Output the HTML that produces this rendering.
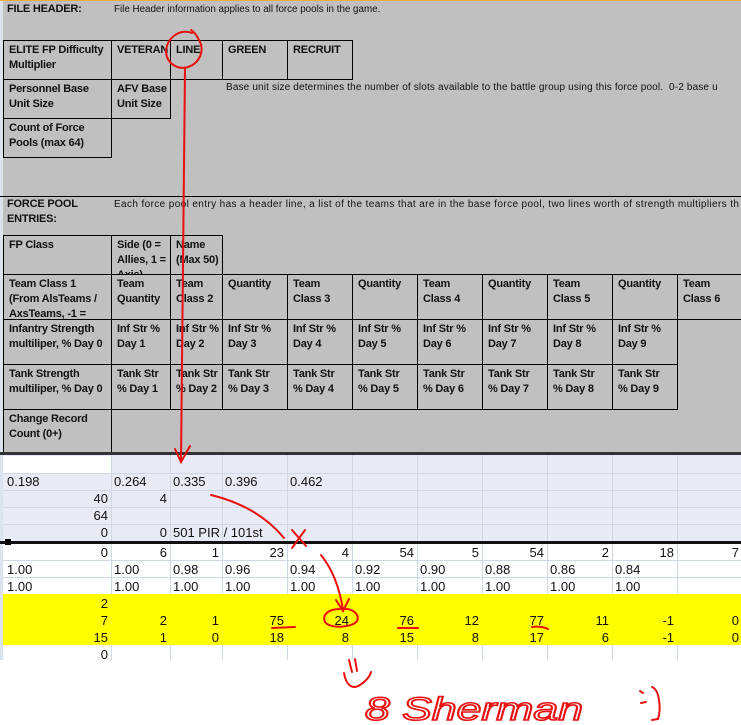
<!DOCTYPE html>
<html><head><meta charset="utf-8"><style>
*{margin:0;padding:0}
body{width:741px;height:725px;position:relative;background:#fff;overflow:hidden;font-family:"Liberation Sans",Arial,sans-serif}
.gray{position:absolute;left:3px;top:0;width:738px;height:453px;background:#c0c0c0}
.strip{position:absolute;left:0;top:0;width:3px;height:660px;background:#dbe3ef}
.c{position:absolute;border:1px solid #000;box-sizing:border-box;font:bold 11px/15px "Liberation Sans",Arial,sans-serif;letter-spacing:-0.2px;padding:2px 0 0 5px;overflow:hidden;white-space:nowrap;color:#111}
.t{position:absolute;font:bold 11px/15px "Liberation Sans",Arial,sans-serif;letter-spacing:-0.2px;color:#111;white-space:nowrap}
.d{position:absolute;font:10px/15px "Liberation Sans",Arial,sans-serif;color:#111;white-space:nowrap}
.n{position:absolute;font:13px/17px "Liberation Sans Narrow","Liberation Sans",Arial,sans-serif;color:#111;white-space:nowrap}
.vl{position:absolute;width:1px;background:#d0d7e5}
.hl{position:absolute;height:1px;background:#d0d7e5;left:3px;width:738px}
</style></head><body>
<div class="gray"></div>
<div class="strip"></div>
<div style="position:absolute;left:0;top:0;width:741px;height:1px;background:#f3a64a"></div>
<div style="position:absolute;left:0;top:196px;width:741px;height:1px;background:#000"></div>

<div class="t" style="left:7px;top:2px">FILE HEADER:</div>
<div class="d" style="left:114px;top:2px;font-size:9.8px">File Header information applies to all force pools in the game.</div>
<div class="d" style="left:226px;top:80px;letter-spacing:0.15px">Base unit size determines the number of slots available to the battle group using this force pool.&nbsp; 0-2 base u</div>
<div class="t" style="left:7px;top:197px">FORCE POOL<br>ENTRIES:</div>
<div class="d" style="left:114px;top:197px;letter-spacing:0.38px">Each force pool entry has a header line, a list of the teams that are in the base force pool, two lines worth of strength multipliers th</div>

<div class="c" style="left:3px;top:40px;width:109px;height:40px">ELITE FP Difficulty<br>Multiplier</div>
<div class="c" style="left:111px;top:40px;width:60px;height:40px">VETERAN</div>
<div class="c" style="left:170px;top:40px;width:53px;height:40px">LINE</div>
<div class="c" style="left:222px;top:40px;width:66px;height:40px">GREEN</div>
<div class="c" style="left:287px;top:40px;width:66px;height:40px">RECRUIT</div>
<div class="c" style="left:3px;top:79px;width:109px;height:40px">Personnel Base<br>Unit Size</div>
<div class="c" style="left:111px;top:79px;width:60px;height:40px">AFV Base<br>Unit Size</div>
<div class="c" style="left:3px;top:118px;width:109px;height:40px">Count of Force<br>Pools (max 64)</div>

<div class="c" style="left:3px;top:235px;width:109px;height:40px">FP Class</div>
<div class="c" style="left:111px;top:235px;width:60px;height:40px">Side (0 =<br>Allies, 1 =<br>Axis)</div>
<div class="c" style="left:170px;top:235px;width:53px;height:40px">Name<br>(Max 50)</div>

<div class="c" style="left:3px;top:274px;width:109px;height:46px">Team Class 1<br>(From AlsTeams /<br>AxsTeams, -1 =</div>
<div class="c" style="left:111px;top:274px;width:60px;height:46px">Team<br>Quantity</div>
<div class="c" style="left:170px;top:274px;width:53px;height:46px">Team<br>Class 2</div>
<div class="c" style="left:222px;top:274px;width:66px;height:46px">Quantity</div>
<div class="c" style="left:287px;top:274px;width:66px;height:46px">Team<br>Class 3</div>
<div class="c" style="left:352px;top:274px;width:66px;height:46px">Quantity</div>
<div class="c" style="left:417px;top:274px;width:66px;height:46px">Team<br>Class 4</div>
<div class="c" style="left:482px;top:274px;width:66px;height:46px">Quantity</div>
<div class="c" style="left:547px;top:274px;width:66px;height:46px">Team<br>Class 5</div>
<div class="c" style="left:612px;top:274px;width:66px;height:46px">Quantity</div>
<div class="c" style="left:677px;top:274px;width:66px;height:46px">Team<br>Class 6</div>

<div class="c" style="left:3px;top:319px;width:109px;height:46px">Infantry Strength<br>multiliper, % Day 0</div>
<div class="c" style="left:111px;top:319px;width:60px;height:46px">Inf Str %<br>Day 1</div>
<div class="c" style="left:170px;top:319px;width:53px;height:46px">Inf Str %<br>Day 2</div>
<div class="c" style="left:222px;top:319px;width:66px;height:46px">Inf Str %<br>Day 3</div>
<div class="c" style="left:287px;top:319px;width:66px;height:46px">Inf Str %<br>Day 4</div>
<div class="c" style="left:352px;top:319px;width:66px;height:46px">Inf Str %<br>Day 5</div>
<div class="c" style="left:417px;top:319px;width:66px;height:46px">Inf Str %<br>Day 6</div>
<div class="c" style="left:482px;top:319px;width:66px;height:46px">Inf Str %<br>Day 7</div>
<div class="c" style="left:547px;top:319px;width:66px;height:46px">Inf Str %<br>Day 8</div>
<div class="c" style="left:612px;top:319px;width:66px;height:46px">Inf Str %<br>Day 9</div>

<div class="c" style="left:3px;top:364px;width:109px;height:46px">Tank Strength<br>multiliper, % Day 0</div>
<div class="c" style="left:111px;top:364px;width:60px;height:46px">Tank Str<br>% Day 1</div>
<div class="c" style="left:170px;top:364px;width:53px;height:46px">Tank Str<br>% Day 2</div>
<div class="c" style="left:222px;top:364px;width:66px;height:46px">Tank Str<br>% Day 3</div>
<div class="c" style="left:287px;top:364px;width:66px;height:46px">Tank Str<br>% Day 4</div>
<div class="c" style="left:352px;top:364px;width:66px;height:46px">Tank Str<br>% Day 5</div>
<div class="c" style="left:417px;top:364px;width:66px;height:46px">Tank Str<br>% Day 6</div>
<div class="c" style="left:482px;top:364px;width:66px;height:46px">Tank Str<br>% Day 7</div>
<div class="c" style="left:547px;top:364px;width:66px;height:46px">Tank Str<br>% Day 8</div>
<div class="c" style="left:612px;top:364px;width:66px;height:46px">Tank Str<br>% Day 9</div>

<div class="c" style="left:3px;top:409px;width:109px;height:45px">Change Record<br>Count (0+)</div>

<div style="position:absolute;left:3px;top:455px;width:738px;height:86px;background:#e8ebf5"></div>
<div style="position:absolute;left:3px;top:456px;width:108px;height:17px;background:#fff"></div>

<div class="vl" style="left:111px;top:455px;height:205px"></div>
<div class="vl" style="left:170px;top:455px;height:205px"></div>
<div class="vl" style="left:222px;top:455px;height:205px"></div>
<div class="vl" style="left:287px;top:455px;height:205px"></div>
<div class="vl" style="left:352px;top:455px;height:205px"></div>
<div class="vl" style="left:417px;top:455px;height:205px"></div>
<div class="vl" style="left:482px;top:455px;height:205px"></div>
<div class="vl" style="left:547px;top:455px;height:205px"></div>
<div class="vl" style="left:612px;top:455px;height:205px"></div>
<div class="vl" style="left:677px;top:455px;height:205px"></div>
<div class="hl" style="top:473px"></div>
<div class="hl" style="top:490px"></div>
<div class="hl" style="top:507px"></div>
<div class="hl" style="top:524px"></div>
<div class="hl" style="top:560px"></div>
<div class="hl" style="top:577px"></div>
<div style="position:absolute;left:3px;top:594px;width:738px;height:51px;background:#ffff00"></div>

<div style="position:absolute;left:0;top:452px;width:741px;height:3px;background:#333"></div>
<div style="position:absolute;left:0;top:541px;width:741px;height:3px;background:#111"></div>
<div style="position:absolute;left:5px;top:539px;width:6px;height:6px;background:#000"></div>

<div class="n" style="left:7px;top:473px">0.198</div>
<div class="n" style="left:114px;top:473px">0.264</div>
<div class="n" style="left:173px;top:473px">0.335</div>
<div class="n" style="left:225px;top:473px">0.396</div>
<div class="n" style="left:290px;top:473px">0.462</div>
<div class="n" style="right:633px;top:490px">40</div>
<div class="n" style="right:574px;top:490px">4</div>
<div class="n" style="right:633px;top:507px">64</div>
<div class="n" style="right:633px;top:524px">0</div>
<div class="n" style="right:574px;top:524px">0</div>
<div class="n" style="left:173px;top:524px">501 PIR / 101st</div>

<div class="n" style="right:633px;top:544px">0</div>
<div class="n" style="right:574px;top:544px">6</div>
<div class="n" style="right:522px;top:544px">1</div>
<div class="n" style="right:457px;top:544px">23</div>
<div class="n" style="right:392px;top:544px">4</div>
<div class="n" style="right:327px;top:544px">54</div>
<div class="n" style="right:262px;top:544px">5</div>
<div class="n" style="right:197px;top:544px">54</div>
<div class="n" style="right:132px;top:544px">2</div>
<div class="n" style="right:67px;top:544px">18</div>
<div class="n" style="right:2px;top:544px">7</div>

<div class="n" style="left:7px;top:561px">1.00</div>
<div class="n" style="left:114px;top:561px">1.00</div>
<div class="n" style="left:173px;top:561px">0.98</div>
<div class="n" style="left:225px;top:561px">0.96</div>
<div class="n" style="left:290px;top:561px">0.94</div>
<div class="n" style="left:355px;top:561px">0.92</div>
<div class="n" style="left:420px;top:561px">0.90</div>
<div class="n" style="left:485px;top:561px">0.88</div>
<div class="n" style="left:550px;top:561px">0.86</div>
<div class="n" style="left:615px;top:561px">0.84</div>

<div class="n" style="left:7px;top:578px">1.00</div>
<div class="n" style="left:114px;top:578px">1.00</div>
<div class="n" style="left:173px;top:578px">1.00</div>
<div class="n" style="left:225px;top:578px">1.00</div>
<div class="n" style="left:290px;top:578px">1.00</div>
<div class="n" style="left:355px;top:578px">1.00</div>
<div class="n" style="left:420px;top:578px">1.00</div>
<div class="n" style="left:485px;top:578px">1.00</div>
<div class="n" style="left:550px;top:578px">1.00</div>
<div class="n" style="left:615px;top:578px">1.00</div>

<div class="n" style="right:633px;top:595px">2</div>

<div class="n" style="right:633px;top:612px">7</div>
<div class="n" style="right:574px;top:612px">2</div>
<div class="n" style="right:522px;top:612px">1</div>
<div class="n" style="right:457px;top:612px">75</div>
<div class="n" style="right:392px;top:612px">24</div>
<div class="n" style="right:327px;top:612px">76</div>
<div class="n" style="right:262px;top:612px">12</div>
<div class="n" style="right:197px;top:612px">77</div>
<div class="n" style="right:132px;top:612px">11</div>
<div class="n" style="right:67px;top:612px">-1</div>
<div class="n" style="right:2px;top:612px">0</div>

<div class="n" style="right:633px;top:629px">15</div>
<div class="n" style="right:574px;top:629px">1</div>
<div class="n" style="right:522px;top:629px">0</div>
<div class="n" style="right:457px;top:629px">18</div>
<div class="n" style="right:392px;top:629px">8</div>
<div class="n" style="right:327px;top:629px">15</div>
<div class="n" style="right:262px;top:629px">8</div>
<div class="n" style="right:197px;top:629px">17</div>
<div class="n" style="right:132px;top:629px">6</div>
<div class="n" style="right:67px;top:629px">-1</div>
<div class="n" style="right:2px;top:629px">0</div>

<div class="n" style="right:633px;top:646px">0</div>

<svg width="741" height="725" style="position:absolute;left:0;top:0" fill="none" stroke="#e81010" stroke-width="2" stroke-linecap="round">
<path d="M192 33 C180 28 166 38 166 52 C167 64 178 70 188 67 C200 63 205 50 199 40 C196 34 193 31 191 30"/>
<path d="M185 69 C183 150 182 300 181 460"/>
<path d="M175 449 L181 462 L190 446"/>
<path d="M211 495 C240 502 265 515 284 538"/>
<path d="M292 530 L306 546 M305 530 L292 548"/>
<path d="M321 555 C333 570 340 590 343 610"/>
<path d="M336 600 L343 611 L349 599"/>
<path d="M340 609 C328 609 322 615 325 622 C330 629 352 628 357 621 C360 614 352 608 343 609"/>
<path d="M272 628 L295 627"/>
<path d="M398 628 L418 628"/>
<path d="M532 627 C537 626 544 627 548 629"/>
<path d="M349 660 L352 672 M355 659 L357 671"/>
<path d="M344 673 C346 685 352 690 360 685 C366 681 370 676 371 672"/>
<path d="M640 691 L643 693 M641 703 L646 702 M652 687 C660 690 661 710 658 719 L652 720"/>
</svg>
<svg width="741" height="725" style="position:absolute;left:0;top:0">
<text x="365" y="720" font-family="Liberation Sans, sans-serif" font-size="32" font-style="italic" fill="none" stroke="#e81010" stroke-width="1.6" textLength="218" lengthAdjust="spacingAndGlyphs">8 Sherman</text>
</svg>
</body></html>
